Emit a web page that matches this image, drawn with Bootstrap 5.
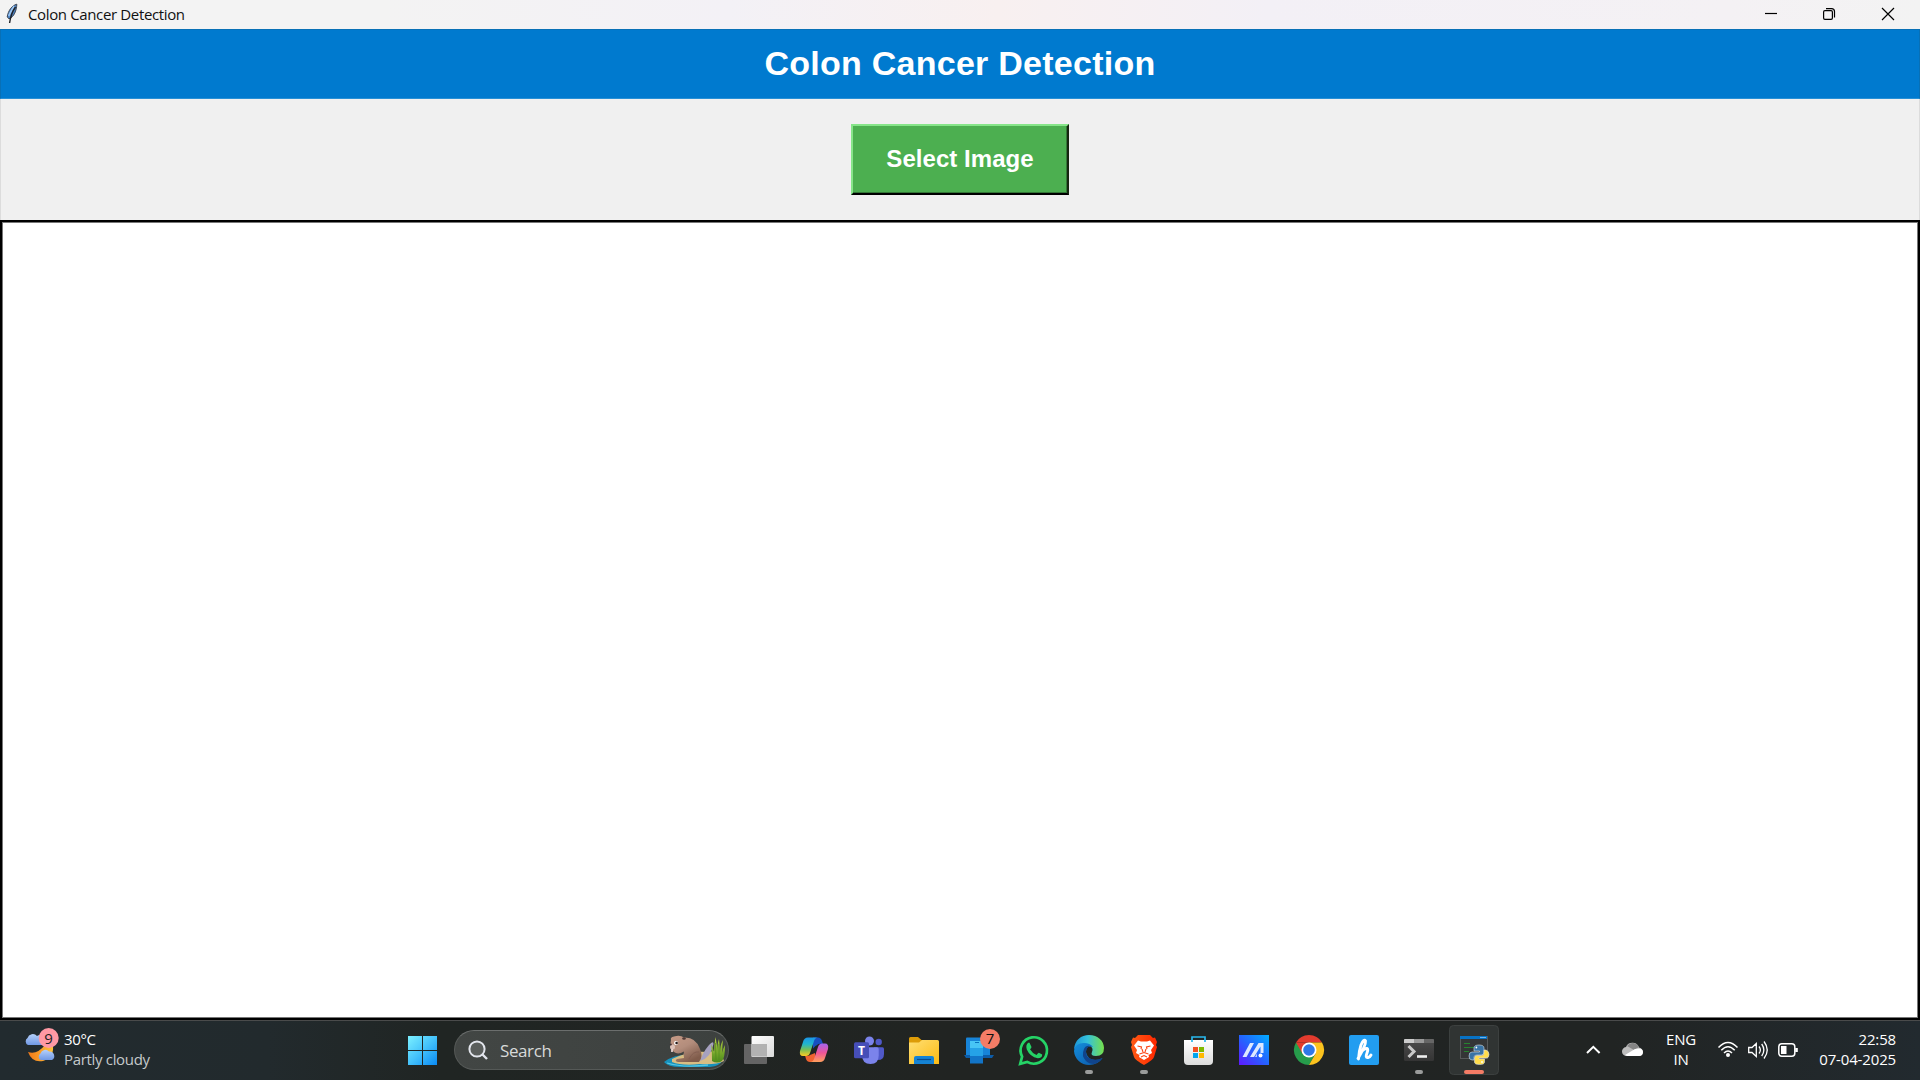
<!DOCTYPE html>
<html lang="en">
<head>
<meta charset="utf-8">
<title>Colon Cancer Detection</title>
<link href="https://cdn.jsdelivr.net/npm/bootstrap@5.3.0/dist/css/bootstrap.min.css" rel="stylesheet">
<style>
body{font-family:"Open Sans","Noto Sans",sans-serif;width:1920px;height:1080px;overflow:hidden;background:#000}
svg{display:block;flex:none}
.titlebar{height:29px;background:linear-gradient(90deg,#f3f3f3 0,#f3f3f3 20%,#f3f1f6 38%,#f8f0f0 52%,#f3f0f6 66%,#f4f1f4 90%,#f3f3f3)}
.win-title{font-size:15px;line-height:29px;color:#111;letter-spacing:-.36px;margin-left:5px}
.app-head{height:70px;background:#007acf;border:1px solid #0870b6;border-bottom-color:#2890d6}
.app-head h1{font:bold 34px/67px "Liberation Sans",Arial,sans-serif;color:#fff;letter-spacing:.25px}
.tool-strip{height:121px;background:#f0f0f0;border:solid #dcdcdc;border-width:0 1px}
.pick-btn{width:218px;height:71px;border-radius:0;border:2px solid;border-color:#86e589 #16260f #000 #86e589;background:#4caf50;box-shadow:inset -1px -1px #347737;color:#fff!important;font:bold 24px/1 "Liberation Sans",Arial,sans-serif;padding:0 0 2px;letter-spacing:.05px}
.pick-btn:hover{background:#4caf50}
.image-area{height:800px;background:#fff;border:2px solid #000;box-shadow:inset 0 0 0 1px #777}
.taskbar{height:60px;background:linear-gradient(90deg,#222b2f 0,#222a2d 14%,#202523 23%,#212422 50%,#212423 84%,#222a2f 100%);border-top:1px solid #4a4b4b;color:#fff}
.taskbar>*{margin-top:-1px}
.weather{width:394px;padding-left:23px}
.two-line{font-size:15px;line-height:20px;letter-spacing:-.15px;padding-bottom:2px}
.weather .two-line{letter-spacing:-.32px}
.soft-text{color:#c5c9cb}
.search-pill{width:275px;height:40px;border:1px solid #555957;border-top-color:#6b6e6d;background:linear-gradient(90deg,#424644,#3d413f);border-radius:20px;margin-left:5px;margin-right:2px;overflow:hidden}
.search-pill span{font-size:17px;letter-spacing:-.4px;color:#d8dad9;width:106px;padding-top:1px}
.ico-text{font-family:"Open Sans",sans-serif}
.lang-box{width:50px}
.clock-box{width:96px;margin-right:24px}
</style>
</head>
<body>
<header class="titlebar d-flex align-items-center">
  <svg class="ms-1" width="19" height="29" viewBox="4 0 19 29"><path d="M16.8 4.2C11.8 5.4 8 11 7.2 17L9 18.8C14 17 16.6 10.5 16.8 4.2Z" fill="#4a82c4" stroke="#3c4654" stroke-width="1"/><path d="M14 6L8.6 16" stroke="#9fc8f4" stroke-width="1.6"/><path d="M15.5 7Q11 13 9.6 23" fill="none" stroke="#202226" stroke-width="1.4"/></svg>
  <span class="win-title">Colon Cancer Detection</span>
  <svg class="ms-auto" width="178" height="29" viewBox="1742 0 178 29" fill="none" stroke="#000" stroke-width="1.2"><path d="M1765 13.5H1777"/><rect x="1823.6" y="10.6" width="8.8" height="8.8" rx="1.3"/><path d="M1826 8.6H1831.5A3 3 0 0 1 1834.5 11.6V17.5"/><path d="M1882 8L1894 20M1894 8L1882 20"/></svg>
</header>
<main>
  <div class="app-head d-flex justify-content-center"><h1 class="m-0">Colon Cancer Detection</h1></div>
  <div class="tool-strip d-flex justify-content-center align-items-center"><button class="btn pick-btn" type="button">Select Image</button></div>
  <div class="image-area"></div>
</main>
<footer class="taskbar d-flex align-items-center">
  <div class="weather d-flex align-items-center">
    <svg width="41" height="60" viewBox="23 1020 41 60">
      <defs>
        <linearGradient id="cloud" x2="0" y2="1"><stop stop-color="#b4d0fa"/><stop offset="1" stop-color="#7098e4"/></linearGradient>
        <linearGradient id="moon"><stop stop-color="#f07818"/><stop offset="1" stop-color="#ffc43c"/></linearGradient>
      </defs>
      <path d="M28 1052Q37 1055 45 1045L53 1046Q54 1058 43 1061Q32 1063 28 1052Z" fill="url(#moon)"/>
      <path d="M29 1045A4 4 0 0 1 28.500 1038A5.500 5.500 0 0 1 38 1036A5 5 0 0 1 44 1045Z" transform="translate(-1)" fill="url(#cloud)"/>
      <path d="M41 1060A3.600 3.600 0 0 1 40.500 1053.500A5 5 0 0 1 49 1051.500A4.600 4.600 0 0 1 52 1060Z" fill="url(#cloud)"/>
      <circle cx="48.700" cy="1038" r="10" fill="#ff99a4"/>
      <text x="48.500" y="1043.500" text-anchor="middle" font-size="15" fill="#222" class="ico-text">9</text>
    </svg>
    <div class="two-line"><div>30°C</div><div class="soft-text">Partly cloudy</div></div>
  </div>

  <!-- Start -->
  <svg width="55" height="60" viewBox="-28 -30 55 60"><defs><linearGradient id="win" x2="1" y2="1" gradientUnits="userSpaceOnUse" gradientTransform="translate(-14.500 -14) scale(29)"><stop stop-color="#7df1ff"/><stop offset=".5" stop-color="#45c3fb"/><stop offset="1" stop-color="#0a8bf5"/></linearGradient></defs><path d="M-14 -14H0V0H-14ZM1 -14H15V0H1ZM-14 1H0V15H-14ZM1 1H15V15H1Z" fill="url(#win)"/></svg>

  <div class="search-pill d-flex align-items-center">
    <svg width="45" height="38" viewBox="455 1031 45 38" fill="none"><circle cx="477" cy="1049" r="7.600" fill="#5a5e5c" stroke="#e2e5ec" stroke-width="2"/><path d="M482.500 1054.500L487 1059" stroke="#e2e5ec" stroke-width="2.400"/></svg>
    <span>Search</span>
    <!-- Beaver on a river bank -->
    <svg class="ms-auto" width="66" height="38" viewBox="662 1031 66 38">
      <defs><linearGradient id="fur" x2=".6" y2="1"><stop stop-color="#c59a86"/><stop offset=".5" stop-color="#b38d7c"/><stop offset="1" stop-color="#805c4b"/></linearGradient><linearGradient id="grass" x2="0" y2="1"><stop stop-color="#b8d542"/><stop offset="1" stop-color="#4c8a1c"/></linearGradient></defs>
      <path d="M664 1062Q672 1055 691 1054Q719 1052 723 1060Q720 1066 710 1067H680Q668 1067 664 1062Z" fill="#1791bc"/>
      <path d="M672 1059Q690 1050 708 1052Q714 1050 721 1053L724 1061Q716 1065 700 1064Q682 1066 672 1062Z" fill="#d8bd83"/>
      <path d="M667 1063Q683 1068 708 1065" stroke="#54c5e3" stroke-width="1.300" fill="none"/>
      <path d="M700 1061Q711 1058 713.500 1044Q713.500 1040 709 1045Q703 1052 700 1061Z" fill="#a6a1c0"/>
      <path d="M671 1040Q670 1037 674 1036.500Q680 1034.500 684 1037.500Q696 1037 700 1049Q703.500 1057 699 1062H678Q674 1061 677 1059L684 1058Q683 1054 684 1051.500Q678 1055 674 1052Q669 1048 671 1040Z" fill="url(#fur)"/>
      <path d="M689 1059Q693 1051 699 1052" fill="none" stroke="#825e51" stroke-width="1"/>
      <ellipse cx="684" cy="1038.500" rx="1.800" ry="1.300" fill="#513a35"/><circle cx="676" cy="1043" r="2" fill="#fff"/><circle cx="676.600" cy="1043" r="1.300" fill="#241a18"/><ellipse cx="672.500" cy="1047" rx="2.500" ry="2.500" fill="#dcc1b7"/><circle cx="670.800" cy="1044.500" r="1" fill="#403034"/><path d="M672 1049V1052" stroke="#f7e4df" stroke-width="1.600"/>
      <path d="M712 1061Q712 1049 711 1044Q714 1050 714 1054Q714 1045 715.500 1037Q717.500 1046 717.500 1053Q717 1044 719 1039Q720 1046 720 1053Q720 1045 723 1040Q722 1048 722.500 1053Q723 1048 725 1045Q725 1058 722 1061Q717 1064 712 1061Z" fill="url(#grass)"/>
      <path d="M715.500 1043L716 1060M719 1044V1060" stroke="#4f861d" stroke-width=".700"/>
    </svg>
  </div>

  <nav class="d-flex">
    <!-- Task view -->
    <svg width="55" height="60" viewBox="-28 -30 55 60"><defs><linearGradient id="tv" x2="1" y2="1"><stop stop-color="#fff"/><stop offset="1" stop-color="#dadada"/></linearGradient></defs><rect x="-15" y="-6" width="23" height="20" rx="1" fill="#646464"/><rect x="-7.500" y="-14" width="22.500" height="21" rx="1" fill="url(#tv)"/><rect x="-7.500" y="-6" width="15.500" height="12.500" fill="#b2b2b2"/></svg>
    <!-- Copilot -->
    <svg width="55" height="60" viewBox="-28 -30 55 60">
      <defs><linearGradient id="cpa" x2="0" y2="1"><stop stop-color="#1b96e8"/><stop offset=".35" stop-color="#20b5ce"/><stop offset=".65" stop-color="#74bf58"/><stop offset="1" stop-color="#ffcd22"/></linearGradient><linearGradient id="cpb" x2="0" y2="1"><stop stop-color="#a364ee"/><stop offset=".5" stop-color="#ee5499"/><stop offset="1" stop-color="#ffa05d"/></linearGradient></defs>
      <path d="M-1 -12.500H4Q7 -12.500 8 -9L9 -6Q5 -7 3 -5L-1 0Z" fill="#174fc0"/>
      <path d="M1 12H-4Q-7 12 -8 9L-9 5.500Q-5 7 -3 4L1 0Z" fill="#ef6330"/>
      <path d="M-6 -12.500H4Q1 -12.500 0 -9L-4 3Q-5 6 -8 6H-11Q-15 6 -14 1L-11 -8Q-10 -12.500 -6 -12.500Z" fill="url(#cpa)"/>
      <path d="M6 12H-4Q-1 12 0 9L4 -3Q5 -6.500 8 -6.500H11Q15 -6.500 14 -1L11 8Q10 12 6 12Z" fill="url(#cpb)"/>
      <path d="M2.500 -5L-1.500 -1L-4 5L1 3Z" fill="#212422"/>
    </svg>
    <!-- Teams -->
    <svg width="55" height="60" viewBox="-28 -30 55 60"><circle cx="9.700" cy="-8" r="3.200" fill="#5059c9"/><path d="M5 -2.700H13.500Q15 -2.700 15 -1V4Q15 10 9 10H5Z" fill="#5059c9"/><circle cx=".500" cy="-9" r="4.500" fill="#7b83eb"/><path d="M-7 -2.700H8Q9.700 -2.700 9.700 -1V5.500Q9.700 14 1.500 14T-7 5.500Z" fill="#7b83eb"/><rect x="-15" y="-7.700" width="15" height="16" rx="1.500" fill="#464eb8"/><text x="-7.500" y="4.500" text-anchor="middle" fill="#fff" font-weight="700" font-size="12" class="ico-text">T</text></svg>
    <!-- File explorer -->
    <svg width="55" height="60" viewBox="-28 -30 55 60"><defs><linearGradient id="fold" x2="1" y2="1"><stop stop-color="#ffdf74"/><stop offset="1" stop-color="#fcbb13"/></linearGradient></defs><path d="M-15 -11.500Q-15 -13 -13.500 -13H-6L-2.500 -10H2V-5H-15Z" fill="#dd9c08"/><path d="M-15 -7.500H-5L-2 -10H13.500Q15 -10 15 -8.500V14H-15Z" fill="url(#fold)"/><path d="M-10 14V8Q-10 6 -8 6H8Q10 6 10 8V14Z" fill="#1583d4"/><path d="M-7 9.500H7" stroke="#0b4c8c" stroke-width="1.200"/></svg>
    <!-- Phone link -->
    <svg width="55" height="60" viewBox="-28 -30 55 60"><rect x="-13" y="-12.500" width="24" height="19" rx="1" fill="#1784d8"/><path d="M-15 5H15L13 8H-13Z" fill="#0c5ca8"/><path d="M-9 -9H4V-2H-9Z" fill="#47c5f5"/><path d="M-9 -2H4V6H-9Z" fill="#25a2e7"/><path d="M-9 6H4V13.500H-9Z" fill="#1274c7"/><path d="M-4 -7.500H0" stroke="#0873be"/><circle cx="11" cy="-11" r="10" fill="#f47c66"/><text x="11" y="-5.700" text-anchor="middle" font-size="15" fill="#111" class="ico-text">7</text></svg>
    <!-- WhatsApp -->
    <svg width="55" height="60" viewBox="-28 -30 55 60"><path d="M-13.800 13.800L-11.900 6.600A13.200 13.200 0 1 1 -6.800 11.900Z" fill="none" stroke="#25d366" stroke-width="2.700"/><path d="M-4.500 -7.200L-2.500 -3Q-2.600 -1.700 -4 -.700Q-1.500 3.600 2.500 5Q4 3.200 4.800 2.700L8.200 4.500Q8.300 8.300 3.800 8.300Q-4 6.800 -7.200 -.500Q-8.600 -5.200 -5.800 -7.300Z" fill="#25d366"/></svg>
    <!-- Edge -->
    <svg width="55" height="60" viewBox="-28 -30 55 60">
      <defs><linearGradient id="ea"><stop stop-color="#1b94d8"/><stop offset=".45" stop-color="#35c1db"/><stop offset="1" stop-color="#76e04a"/></linearGradient><linearGradient id="eb" x2="1" y2="1"><stop stop-color="#148edc"/><stop offset="1" stop-color="#0b55a6"/></linearGradient></defs>
      <path d="M-15 -1C-14 -10 -8 -15 0 -15C9 -15 15 -9 15 -2Q15 6 7 6Q1 6 3 2Q5 -2 0 -5Q-7 -9 -15 -1Z" fill="url(#ea)"/>
      <path d="M-15 1Q-14 -7 -5 -7Q1 -7 4 -3Q-3 -5 -3 2Q-2 9 6 10Q10 10 13.500 8Q9 15 0 15A15 15 0 0 1 -15 1Z" fill="url(#eb)"/>
      <path d="M-5 -1Q-8 6 -3 11Q0 14 5 14Q11 12 13.500 8Q8 11 2 9Q-4 6 -3 1Q-2 -3 1 -4Q-3 -5 -5 -1Z" fill="#10448c"/>
      <rect x="-4" y="20" width="8" height="4" rx="2" fill="#9a9c9b"/></svg>
    <!-- Brave -->
    <svg width="55" height="60" viewBox="-28 -30 55 60"><defs><linearGradient id="br"><stop stop-color="#ff5a14"/><stop offset="1" stop-color="#ff2700"/></linearGradient></defs><path d="M-6 -15H6L9 -12L11 -12.500L13 -8L12 -5L13 -3L10 7Q9 10 0 15Q-9 10 -10 7L-13 -3L-12 -5L-13 -8L-11 -12.500L-9 -12Z" fill="url(#br)"/><path d="M-6 -9.500L-3 -8.500H3L6 -9.500L10 -4.500L7 0L8 3L4.500 5L5 7L0 10L-5 7L-4.500 5L-8 3L-7 0L-10 -4.500Z" fill="#fff"/><path d="M-6.500 -4L-2.500 -3L-3 -1M6.500 -4L2.500 -3L3 -1M-2 -1L-1 2M2 -1L1 2M-4.500 4L0 2.500L4.500 4M-3 7L0 5.500L3 7" fill="none" stroke="#fb4312" stroke-width="1.100"/><rect x="-4" y="20" width="8" height="4" rx="2" fill="#9a9c9b"/></svg>
    <!-- Store -->
    <svg width="55" height="60" viewBox="-28 -30 55 60"><defs><linearGradient id="bag" x2="0" y2="1"><stop stop-color="#fff"/><stop offset="1" stop-color="#dcdcdc"/></linearGradient></defs><path d="M-15 -10H14V11Q14 15 10 15H-11Q-15 15 -15 11Z" fill="url(#bag)"/><path d="M-7 -8V-13H6V-8" fill="none" stroke="#28b8ed" stroke-width="1.700"/><path d="M-6 -3H-1V2H-6Z" fill="#f25022"/><path d="M0 -3H5V2H0Z" fill="#7fba00"/><path d="M-6 3H-1V8H-6Z" fill="#00a4ef"/><path d="M0 3H5V8H0Z" fill="#ffb900"/></svg>
    <!-- MyASUS -->
    <svg width="55" height="60" viewBox="-28 -30 55 60"><defs><linearGradient id="asus" x1="0" y1="1" x2="1" y2="0"><stop stop-color="#6018ff"/><stop offset=".5" stop-color="#2464ff"/><stop offset="1" stop-color="#00adff"/></linearGradient></defs><rect x="-15" y="-15" width="30" height="30" fill="url(#asus)"/><path d="M-11.500 7L-4 -7H0L-7.500 7ZM-4 7L4.500 -7H9.500V3H6.500V-3.500L0 7Z" fill="#dce8ff"/><path d="M1 7L3 3.500V7Z" fill="#b8ceff"/><circle cx="6.500" cy="5.500" r="2" fill="#fff"/></svg>
    <!-- Chrome -->
    <svg width="55" height="60" viewBox="-28 -30 55 60"><path d="M-13 -7.500A15 15 0 0 1 13 -7.500Z" fill="#e33b2e"/><path d="M-13 -7.500A15 15 0 0 0 0 15L6.500 3.700L0 0Z" fill="#269c4b"/><path d="M13 -7.500A15 15 0 0 1 0 15L6.500 3.700L0 -7.500Z" fill="#fcc31e"/><path d="M-13 -7.500H0L-6.500 3.700Z" fill="#e33b2e"/><circle r="7.500" fill="#fff"/><circle r="5.800" fill="#2f78e8"/></svg>
    <!-- h app -->
    <svg width="55" height="60" viewBox="-28 -30 55 60"><rect x="-15" y="-15" width="30" height="30" rx="2" fill="#229df0"/><path d="M-6 8.500Q2 -5 1.500 -9Q0 -12 -3 -5Q-5 1 -5.500 9M-4.500 4Q0 -2 3 -1.500Q4.500 -1 3 3Q1 8 4 7.500Q6 7 7 5" fill="none" stroke="#fff" stroke-width="2.900" stroke-linecap="round" stroke-linejoin="round"/></svg>
    <!-- Terminal -->
    <svg width="55" height="60" viewBox="-28 -30 55 60"><defs><linearGradient id="term" x2="0" y2="1"><stop stop-color="#4c4c4c"/><stop offset="1" stop-color="#343434"/></linearGradient></defs><rect x="-15" y="-11" width="30" height="22" rx="1.500" fill="url(#term)"/><path d="M-15 -7V-10Q-15 -11 -14 -11H-5V-7Z" fill="#ccc"/><path d="M-5 -11H5V-7H-5Z" fill="#999"/><path d="M5 -11H14Q15 -11 15 -10V-7H5Z" fill="#666"/><path d="M-10.500 -4L-5 1.500L-10.500 7" fill="none" stroke="#c8c8c8" stroke-width="3"/><path d="M-2 6.500H8" stroke="#eee" stroke-width="2.600"/><rect x="-4" y="20" width="8" height="4" rx="2" fill="#9a9c9b"/></svg>
    <!-- Python window -->
    <svg width="55" height="60" viewBox="-28 -30 55 60"><rect x="-24.500" y="-24.500" width="49" height="49" rx="4" fill="#303433" stroke="#3c403f"/><rect x="-13.500" y="-13.500" width="27" height="22" fill="#343536" stroke="#58595a"/><path d="M-14 -14H13V-11H-14Z" fill="#0772c5"/><path d="M6 -12.500H12" stroke="#72b3e5"/><path d="M-10 -6.500H-4M-10 -2.500H0M-10 1.500H-5" stroke="#26832e" stroke-width="1.200"/>
      <g stroke="#d9e1e8" stroke-width=".600"><path d="M5 -5Q0 -5 0 -2V1H5.500V2H-2Q-5 2 -5 6T-2 10H0V7Q0 5 3 5H7.500Q10 5 10 2V-2Q10 -5 5 -5Z" fill="#3973a5"/><path d="M5.500 14.500Q10.500 14.500 10.500 12V9H5V8H12Q15 8 15 4.500T12 0H10V3Q10 5.500 7 5.500H3Q.500 5.500 .500 8V12Q.500 14.500 5.500 14.500Z" fill="#ffdc4c"/></g><circle cx="2.400" cy="-2.500" r=".900" fill="#fff"/><circle cx="8" cy="12" r=".900" fill="#fff"/><rect x="-10" y="20" width="20" height="4" rx="2" fill="#f47c66"/></svg>
  </nav>

  <div class="d-flex align-items-center ms-auto">
    <svg width="76" height="60" viewBox="1580 1020 76 60"><path d="M1587 1053L1593.300 1046.800L1599.600 1053" fill="none" stroke="#fff" stroke-width="2"/><path d="M1627 1056A4.500 4.500 0 0 1 1626 1047A7 7 0 0 1 1639 1047.500A4.500 4.500 0 0 1 1640 1056Z" fill="#bdbdbd"/><path d="M1627 1046A7 7 0 0 1 1639 1047L1634 1050Z" fill="#858585"/><path d="M1625 1055L1635 1049Q1643 1047 1643 1052Q1643 1056 1639 1056H1627Z" fill="#fff"/></svg>
    <div class="lang-box two-line text-center"><div>ENG</div><div>IN</div></div>
    <svg width="94" height="60" viewBox="1706 1020 94 60" fill="none" stroke="#fff" stroke-width="1.500">
      <path d="M1718.500 1047.500Q1728 1037.500 1737.500 1047.500M1721.300 1050.300Q1728 1043 1734.700 1050.300M1724 1053Q1728 1049 1732 1053"/><circle cx="1728" cy="1055" r="2" fill="#fff" stroke="none"/>
      <path d="M1748.700 1047.500H1752L1756.300 1043.500V1056.500L1752 1052.500H1748.700ZM1759 1046.500Q1761.700 1050 1759 1053.500M1761.700 1044Q1766 1050 1761.700 1056M1764 1041.500Q1770.500 1050 1764 1058.500" stroke-width="1.300"/>
      <rect x="1778.800" y="1043.800" width="16" height="12.500" rx="3"/><rect x="1781" y="1046" width="5.500" height="8" fill="#fff" stroke="none"/><path d="M1796.500 1048V1052" stroke-width="2.600"/>
    </svg>
    <div class="two-line clock-box text-end"><div>22:58</div><div>07-04-2025</div></div>
  </div>
</footer>
<script src="https://cdn.jsdelivr.net/npm/bootstrap@5.3.0/dist/js/bootstrap.bundle.min.js"></script>
</body>
</html>
